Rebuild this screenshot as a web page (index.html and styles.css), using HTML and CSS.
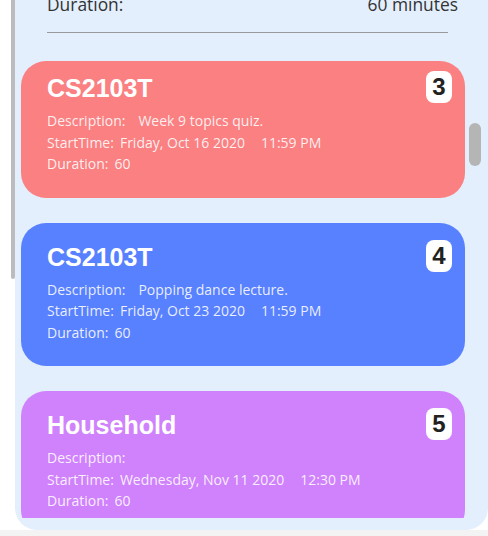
FILE: index.html
```html
<!DOCTYPE html>
<html>
<head>
<meta charset="utf-8">
<link rel="stylesheet" href="styles.css">
</head>
<body>
<div class="app">
  <div class="main">
    <div class="outer-track"><div class="outer-thumb"></div></div>
    <div class="panel">
      <div class="detail">
        <div class="detail-row"><span>Duration:</span><span>60 minutes</span></div>
        <div class="sep"></div>
      </div>
      <div class="list">
        <div class="cards">
          <div class="card card-red card-first">
            <div class="card-head">
              <div class="title">CS2103T</div>
              <div class="badge">3</div>
            </div>
            <div class="row"><span class="label label-desc">Description:</span><span>Week 9 topics quiz.</span></div>
            <div class="row"><span class="label">StartTime:</span><span>Friday, Oct 16 2020</span><span class="time">11:59 PM</span></div>
            <div class="row"><span class="label">Duration:</span><span>60</span></div>
          </div>
          <div class="card card-blue">
            <div class="card-head">
              <div class="title">CS2103T</div>
              <div class="badge">4</div>
            </div>
            <div class="row"><span class="label label-desc">Description:</span><span>Popping dance lecture.</span></div>
            <div class="row"><span class="label">StartTime:</span><span>Friday, Oct 23 2020</span><span class="time">11:59 PM</span></div>
            <div class="row"><span class="label">Duration:</span><span>60</span></div>
          </div>
          <div class="card card-purple">
            <div class="card-head">
              <div class="title">Household</div>
              <div class="badge">5</div>
            </div>
            <div class="row"><span class="label label-desc">Description:</span><span></span></div>
            <div class="row"><span class="label">StartTime:</span><span>Wednesday, Nov 11 2020</span><span class="time">12:30 PM</span></div>
            <div class="row"><span class="label">Duration:</span><span>60</span></div>
          </div>
        </div>
        <div class="vtrack"><div class="vthumb"></div></div>
      </div>
    </div>
  </div>
  <div class="bottom-strip"></div>
</div>
</body>
</html>
```

FILE: styles.css
```css
html, body {
  margin: 0;
  padding: 0;
  background: #ffffff;
}
.app {
  width: 488px;
  height: 536px;
  display: flex;
  flex-direction: column;
  overflow: hidden;
}
.main {
  height: 530px;
  display: flex;
}
.outer-track {
  width: 15px;
  flex-shrink: 0;
}
.outer-thumb {
  margin-left: 11px;
  width: 4px;
  height: 279px;
  background: #bcbcbc;
  border-radius: 0 0 2px 2px;
}
.panel {
  flex: 1;
  background: #e3effd;
  border-radius: 0 0 22px 22px;
  overflow: hidden;
  display: flex;
  flex-direction: column;
}
.detail {
  margin-top: -7px;
  padding: 0 30px 0 32px;
}
.detail-row {
  display: flex;
  justify-content: space-between;
  font-family: "Open Sans", "Noto Sans", sans-serif;
  font-size: 17.4px;
  line-height: 22px;
  color: #333333;
}
.sep {
  margin-top: 17px;
  margin-right: 10px;
  height: 1px;
  background: #9a9a9a;
}
.list {
  margin-top: 28px;
  height: 457px;
  display: flex;
  overflow: hidden;
}
.cards {
  margin-left: 6px;
  width: 444px;
  display: flex;
  flex-direction: column;
  gap: 25px;
}
.card {
  flex-shrink: 0;
  border-radius: 25px;
  padding: 17px 13px 23px 26px;
  color: rgba(255, 255, 255, 0.88);
  font-family: "Open Sans", "Noto Sans", sans-serif;
  font-size: 14px;
}
.card-first {
  padding-top: 10px;
}
.card-red { background: #fa8082; }
.card-blue { background: #5881ff; }
.card-purple { background: #d082fd; }
.card-head {
  display: flex;
  justify-content: space-between;
  align-items: flex-start;
  margin-bottom: 7px;
}
.title {
  margin-top: 3px;
  font-family: "Liberation Sans", Arial, sans-serif;
  font-weight: bold;
  font-size: 25px;
  line-height: 29px;
  color: #ffffff;
}
.badge {
  width: 26px;
  height: 32px;
  border-radius: 8px;
  background: #ffffff;
  color: #222222;
  font-family: "Liberation Sans", Arial, sans-serif;
  font-weight: bold;
  font-size: 24px;
  line-height: 32px;
  text-align: center;
}
.row {
  display: flex;
  line-height: 21.5px;
  white-space: nowrap;
}
.label {
  margin-right: 6px;
}
.label-desc {
  margin-right: 13px;
}
.time {
  margin-left: 16px;
}
.vtrack {
  margin-left: 4px;
  width: 12px;
  flex-shrink: 0;
}
.vthumb {
  margin-top: 62px;
  width: 12px;
  height: 43px;
  border-radius: 6px;
  background: #b5b5b5;
}
.bottom-strip {
  height: 6px;
  background: #f3f3f3;
}
```
